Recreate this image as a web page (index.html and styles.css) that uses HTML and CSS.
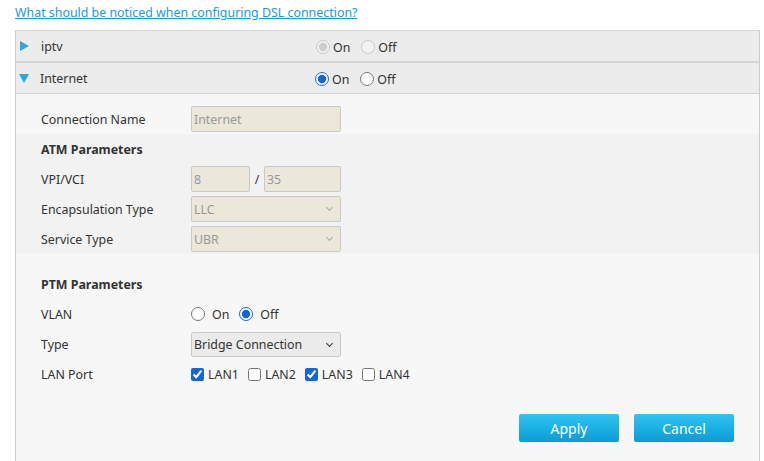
FILE: index.html
```html
<!DOCTYPE html>
<html lang="en">
<head>
    <meta charset="UTF-8">
    <title>DSL Settings</title>
    <link rel="stylesheet" href="styles.css">
</head>
<body>
    <div class="help"><a href="#">What should be noticed when configuring DSL connection?</a></div>

    <div class="panel">
        <!--连接列表-->
        <div class="conn-head">
            <span class="arrow arrow-right"></span>
            <span class="conn-name">iptv</span>
            <label class="head-radio"><input type="radio" name="iptv" checked disabled>On</label>
            <label class="head-radio"><input type="radio" name="iptv" disabled>Off</label>
        </div>
        <div class="conn-head conn-open">
            <span class="arrow arrow-down"></span>
            <span class="conn-name">Internet</span>
            <label class="head-radio"><input type="radio" name="inet" checked>On</label>
            <label class="head-radio"><input type="radio" name="inet">Off</label>
        </div>

        <div class="conn-body">
            <div class="section first">
                <div class="field">
                    <span class="label">Connection Name</span>
                    <input class="txt" type="text" value="Internet" disabled>
                </div>
            </div>

            <!--ATM参数-->
            <div class="section atm">
                <div class="field"><span class="title">ATM Parameters</span></div>
                <div class="field">
                    <span class="label">VPI/VCI</span>
                    <input class="txt vpi" type="text" value="8" disabled>
                    <span class="slash">/</span>
                    <input class="txt vci" type="text" value="35" disabled>
                </div>
                <div class="field">
                    <span class="label">Encapsulation Type</span>
                    <span class="sel-wrap off"><select class="sel" disabled><option>LLC</option></select></span>
                </div>
                <div class="field">
                    <span class="label">Service Type</span>
                    <span class="sel-wrap off"><select class="sel" disabled><option>UBR</option></select></span>
                </div>
            </div>

            <!--PTM参数-->
            <div class="section ptm">
                <div class="field"><span class="title">PTM Parameters</span></div>
                <div class="field">
                    <span class="label">VLAN</span>
                    <label class="opt"><input type="radio" name="vlan">On</label>
                    <label class="opt"><input type="radio" name="vlan" checked>Off</label>
                </div>
                <div class="field">
                    <span class="label">Type</span>
                    <span class="sel-wrap"><select class="sel sel-on"><option>Bridge Connection</option></select></span>
                </div>
                <div class="field">
                    <span class="label">LAN Port</span>
                    <label class="port"><input type="checkbox" checked>LAN1</label>
                    <label class="port"><input type="checkbox">LAN2</label>
                    <label class="port"><input type="checkbox" checked>LAN3</label>
                    <label class="port"><input type="checkbox">LAN4</label>
                </div>
            </div>

            <div class="action">
                <button class="btn">Apply</button>
                <button class="btn">Cancel</button>
            </div>
        </div>
    </div>
</body>
</html>
```

FILE: styles.css
```css
*{
    margin: 0;
    padding: 0;
    box-sizing: border-box;
}
body{
    font-family: "Noto Sans", "Open Sans", sans-serif;
    font-size: 12.4px;
    color: #333;
    background: #fff;
}
/*帮助链接*/
.help{
    height: 30px;
    padding: 4px 0 0 15px;
}
.help a{
    color: #1a9ad9;
    text-decoration: underline;
}

/*面板*/
.panel{
    margin: 0 4px 0 15px;
    border-left: 1px solid #ccc;
    border-right: 1px solid #ccc;
    border-top: 1px solid #d4d4d4;
    min-height: 431px;
    background: #f7f7f7;
}
.conn-head{
    display: flex;
    align-items: center;
    height: 32px;
    background: #ececec;
    border-bottom: 2px solid #d4d4d4;
}
.conn-head.conn-open{
    height: 31px;
    border-bottom: 1px solid #d4d4d4;
}
.arrow{
    width: 0;
    height: 0;
    margin-left: 4px;
}
.arrow-right{
    border-top: 5px solid transparent;
    border-bottom: 5px solid transparent;
    border-left: 9px solid #2aa8e0;
    margin-right: 12px;
}
.arrow-down{
    margin-left: 3px;
    border-left: 5px solid transparent;
    border-right: 5px solid transparent;
    border-top: 9px solid #2aa8e0;
    margin-right: 11px;
}
.conn-name{
    width: 275px;
}
.head-radio{
    display: flex;
    align-items: center;
    margin-right: 11px;
    padding-top: 2px;
}
.head-radio input{
    width: 14px;
    height: 14px;
    margin-right: 3px;
}
input[type=radio], input[type=checkbox]{
    accent-color: #1466d8;
}

/*表单区*/
.section{
    padding-left: 25px;
}
.section.first{
    padding-top: 10px;
}
.section.atm{
    background: #f2f2f2;
}
.section.ptm{
    padding-top: 15px;
}
.field{
    display: flex;
    align-items: center;
    height: 30px;
}
.label{
    width: 150px;
}
.title{
    font-weight: bold;
}
.txt, .sel{
    height: 26px;
    width: 150px;
    border: 1px solid #c9c9c9;
    border-radius: 2px;
    background: #ebe7d9;
    color: #999;
    font-family: inherit;
    font-size: 12.4px;
    padding-left: 2px;
}
.txt.vpi{
    width: 59px;
}
.txt.vci{
    width: 77px;
}
.slash{
    width: 14px;
    text-align: center;
    color: #333;
}
/*下拉框：自己画箭头*/
.sel-wrap{
    position: relative;
    display: flex;
}
.sel{
    appearance: none;
    opacity: 1;
}
.sel-wrap::after{
    content: "";
    position: absolute;
    right: 9px;
    top: 9px;
    width: 4px;
    height: 4px;
    border-right: 1px solid #333;
    border-bottom: 1px solid #333;
    transform: rotate(45deg);
}
.sel-wrap.off::after{
    border-color: #aaa;
}
.sel-on{
    height: 25px;
    background: #ebebeb;
    color: #333;
}
.opt{
    display: flex;
    align-items: center;
    margin-right: 10px;
}
.opt input{
    width: 14px;
    height: 14px;
    margin-right: 7px;
}
.port{
    display: flex;
    align-items: center;
    margin-right: 9px;
}
.port input{
    width: 13px;
    height: 13px;
    margin-right: 4px;
}

/*按钮*/
.action{
    display: flex;
    justify-content: flex-end;
    gap: 15px;
    padding: 25px 25px 0 0;
}
.btn{
    width: 100px;
    height: 28px;
    border: none;
    border-radius: 2px;
    background: linear-gradient(#30c4f4, #0a9cd4);
    color: #fff;
    font-family: inherit;
    font-size: 14px;
}
```
